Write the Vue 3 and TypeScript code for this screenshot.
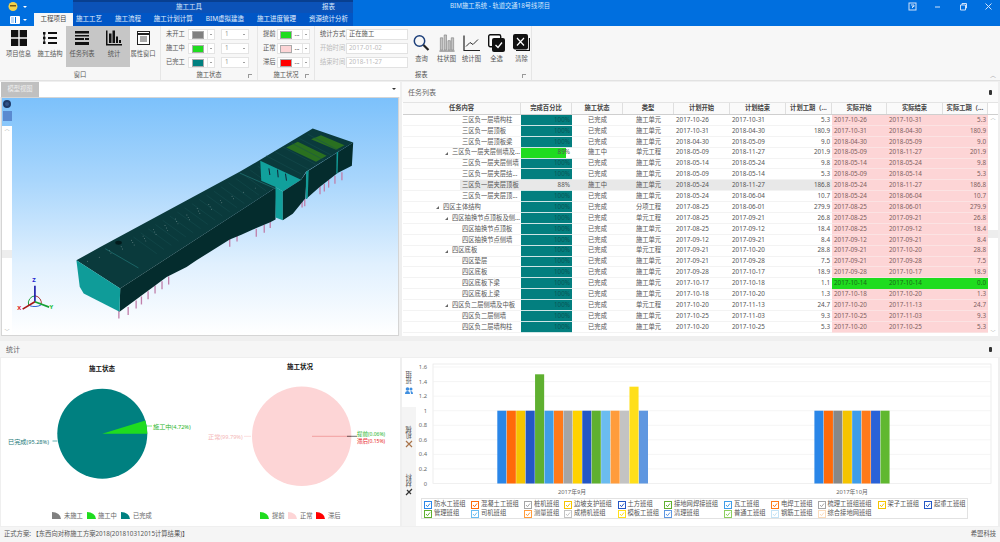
<script setup lang="ts">
interface Row {
  name: string
  depth: number
  pct: number
  state: string
  type: string
  ps: string
  pe: string
  pd: string
  as?: string
  ae?: string
  ad?: string
  early?: boolean
  selected?: boolean
}

const unit = '施工单元'
const group = '单元工程'
const done = '已完成'

const rows: Row[] = [
  { name: '三区负一层墙构柱', depth: 2, pct: 100, state: done, type: unit, ps: '2017-10-26', pe: '2017-10-31', pd: '5.3' },
  { name: '三区负一层顶板', depth: 2, pct: 100, state: done, type: unit, ps: '2017-10-31', pe: '2018-04-30', pd: '180.9' },
  { name: '三区负一层顶板梁', depth: 2, pct: 100, state: done, type: unit, ps: '2018-04-30', pe: '2018-05-09', pd: '9.0' },
  { name: '三区负一层夹层侧墙及...', depth: 1, pct: 89, state: '施工中', type: group, ps: '2018-05-09', pe: '2018-11-27', pd: '201.9' },
  { name: '三区负一层夹层侧墙', depth: 2, pct: 100, state: done, type: unit, ps: '2018-05-14', pe: '2018-05-24', pd: '9.8' },
  { name: '三区负一层夹层结...', depth: 2, pct: 100, state: done, type: unit, ps: '2018-05-09', pe: '2018-05-14', pd: '5.3' },
  { name: '三区负一层夹层顶板', depth: 2, pct: 88, state: '施工中', type: unit, ps: '2018-05-24', pe: '2018-11-27', pd: '186.8', selected: true },
  { name: '三区负一层夹层顶...', depth: 2, pct: 100, state: done, type: unit, ps: '2018-05-24', pe: '2018-06-04', pd: '10.7' },
  { name: '四区主体结构', depth: 0, pct: 100, state: done, type: '分项工程', ps: '2017-08-25', pe: '2018-06-01', pd: '279.9' },
  { name: '四区抽换节点顶板及侧...', depth: 1, pct: 100, state: done, type: group, ps: '2017-08-25', pe: '2017-09-21', pd: '26.8' },
  { name: '四区抽换节点顶板', depth: 2, pct: 100, state: done, type: unit, ps: '2017-08-25', pe: '2017-09-12', pd: '18.4' },
  { name: '四区抽换节点侧墙', depth: 2, pct: 100, state: done, type: unit, ps: '2017-09-12', pe: '2017-09-21', pd: '8.4' },
  { name: '四区底板', depth: 1, pct: 100, state: done, type: group, ps: '2017-09-21', pe: '2017-10-20', pd: '28.8' },
  { name: '四区垫层', depth: 2, pct: 100, state: done, type: unit, ps: '2017-09-21', pe: '2017-09-28', pd: '7.5' },
  { name: '四区底板', depth: 2, pct: 100, state: done, type: unit, ps: '2017-09-28', pe: '2017-10-17', pd: '18.9' },
  { name: '四区底板下梁', depth: 2, pct: 100, state: done, type: unit, ps: '2017-10-17', pe: '2017-10-18', pd: '1.1', as: '2017-10-14', ae: '2017-10-14', ad: '0.0', early: true },
  { name: '四区底板上梁', depth: 2, pct: 100, state: done, type: unit, ps: '2017-10-18', pe: '2017-10-20', pd: '1.3' },
  { name: '四区负二层侧墙及中板', depth: 1, pct: 100, state: done, type: group, ps: '2017-10-20', pe: '2017-11-13', pd: '24.7' },
  { name: '四区负二层侧墙', depth: 2, pct: 100, state: done, type: unit, ps: '2017-10-25', pe: '2017-11-03', pd: '9.3' },
  { name: '四区负二层墙构柱', depth: 2, pct: 100, state: done, type: unit, ps: '2017-10-20', pe: '2017-10-25', pd: '5.3' }
]

const columns = ['任务内容', '完成百分比', '施工状态', '类型', '计划开始', '计划结束', '计划工期（...', '实际开始', '实际结束', '实际工期（...']

const tabs = ['施工工艺', '施工流程', '施工计划计算', 'BIM虚拟建造', '施工进度管理', '资源统计分析']

const statusRows = [
  { label: '未开工', color: '#808080' },
  { label: '施工中', color: '#1fdc1f' },
  { label: '已完工', color: '#008080' }
]
const progressRows = [
  { label: '提前', color: '#1fdc1f' },
  { label: '正常', color: '#fdd5d6' },
  { label: '滞后', color: '#f00' }
]
const filters = [
  { label: '统计方式', value: '正在施工', off: false },
  { label: '开始时间', value: '2017-01-02', off: true },
  { label: '结束时间', value: '2018-11-27', off: true }
]

const y0 = 483.5
const perUnit = 72.8
const ticks = ['0', '0.2', '0.4', '0.6', '0.8', '1', '1.2', '1.4', '1.6']

const first: [string, number][] = [
  ['#2a86e8', 1], ['#ff6a0a', 1], ['#f5c400', 1], ['#2457c5', 1], ['#5fb030', 1.5], ['#3f9de8', 1], ['#ff7a1a', 1], ['#a5a5a5', 1],
  ['#ffd200', 1], ['#2457c5', 1], ['#5fb030', 1], ['#6bbcf0', 1], ['#ff9c3c', 1], ['#c3c3c3', 1], ['#ffdf1a', 1.33], ['#5f97e0', 1]
]
const second = ['#2a86e8', '#ff6a0a', '#888888', '#f5c400', '#3f9de8', '#ff7a1a', '#2a62d8', '#60b830']

const legend = [
  { t: '防水工班组', c: '#2a86e8' }, { t: '混凝土工班组', c: '#ff6a0a' }, { t: '桩机班组', c: '#a5a5a5' }, { t: '边坡支护班组', c: '#f5c400' },
  { t: '土方班组', c: '#2457c5' }, { t: '接地网焊接班组', c: '#5fb030' }, { t: '瓦工班组', c: '#3f9de8' }, { t: '电焊工班组', c: '#ff7a1a' },
  { t: '梳理工班组班组', c: '#a5a5a5' }, { t: '架子工班组', c: '#f5c400' }, { t: '起重工班组', c: '#2457c5' },
  { t: '管理班组', c: '#5fb030' }, { t: '司机班组', c: '#6bbcf0' }, { t: '测量班组', c: '#ff9c3c' }, { t: '成槽机班组', c: '#c3c3c3' },
  { t: '模板工班组', c: '#ffdf1a' }, { t: '清理班组', c: '#5f97e0' }, { t: '普通工班组', c: '#8ccf5f' }, { t: '钢筋工班组', c: '#c5e3f5' },
  { t: '综合接地网班组', c: '#fbdcbc' }
]

// piles under the long side of the model, in zoomed-up model coordinates
const piles = [
  [356, 678], [384, 668], [408, 648], [424, 636], [444, 620], [465, 603], [486, 590], [506, 576],
  [690, 462], [712, 446], [770, 432], [794, 420], [812, 406], [908, 344], [916, 340],
  [962, 304], [975, 296], [988, 284], [1007, 272], [1028, 262]
]
const ribsA = Array.from({ length: 18 }, (_, i) => i)
const ribsB = Array.from({ length: 6 }, (_, i) => i)
const dotsA = Array.from({ length: 36 }, (_, i) => i)
</script>

<template>
  <div class="app">
    <header class="titlebar">
      <div class="title-top">
        <div class="quick">
          <svg width="12" height="11" viewBox="0 0 12 11"><circle cx="6" cy="5.5" r="4.5" fill="#f3d24a" /><rect x="3" y="4" width="6" height="1.5" fill="#7a5a10" /></svg>
          <span class="caret-w"></span>
        </div>
        <div class="context">
          <span class="ctx-tool">施工工具</span>
          <span class="ctx-report">报表</span>
        </div>
        <div class="app-title">BIM施工系统 - 轨道交通18号线项目</div>
        <div class="win">
          <svg width="9" height="9" viewBox="0 0 9 9"><rect x="1" y="1" width="7" height="7" fill="none" stroke="#cfe2fa" /><path d="M3 3h3v1.5H4.5V6" fill="none" stroke="#cfe2fa" /></svg>
          <svg width="9" height="9" viewBox="0 0 9 9"><path d="M2 5h5" stroke="#cfe2fa" /></svg>
          <svg width="9" height="9" viewBox="0 0 9 9"><path d="M1.5 3h5v5h-5zM3 3V1.500h4.500V6H6.500" fill="none" stroke="#cfe2fa" /></svg>
          <svg width="9" height="9" viewBox="0 0 9 9"><path d="M1.5 1.500l6 6M7.500 1.500l-6 6" stroke="#cfe2fa" /></svg>
        </div>
      </div>
      <div class="title-tabs">
        <div class="file-btn">
          <svg width="10" height="8" viewBox="0 0 10 8"><rect width="10" height="8" rx="1" fill="#fff" /><rect x="5" y="1" width="1" height="6" fill="#006fdf" /><rect x="1" y="1" width="3" height="6" fill="#bcd8f6" /></svg>
          <span class="caret-w"></span>
        </div>
        <div class="tab active">工程项目</div>
        <div class="tabs-band">
          <span v-for="t in tabs" :key="t" class="tab">{{ t }}</span>
        </div>
      </div>
    </header>

    <section class="ribbon">
      <div class="rgroup g-window">
        <div class="rbody">
          <div class="rbtn">
            <svg width="16" height="16" viewBox="0 0 16 16"><path d="M0 0h7.300v7.300H0zM8.700 0H16v7.300H8.700zM0 8.700h7.300V16H0zM8.700 8.700H16V16H8.700z" fill="#111" /></svg>
            <span>项目信息</span>
          </div>
          <div class="rbtn">
            <svg width="16" height="16" viewBox="0 0 16 16"><path d="M1 2h2.500v2.500H1zM1 6.800h2.500v2.500H1zM1 11.500h2.500V14H1zM6 2h9v2H6zM6 7h9v2H6zM6 12h9v2H6z" fill="#111" /><path d="M2.200 4v8.500" stroke="#111" /></svg>
            <span>施工结构</span>
          </div>
          <div class="rbtn on">
            <svg width="16" height="14" viewBox="0 0 16 14"><path d="M1 0h14v2.500H1zM1 4h14v1.500H1zM1 7h9v2H1zM11 7h4v2h-4zM1 11h14v3H1z" fill="#111" /></svg>
            <span>任务列表</span>
          </div>
          <div class="rbtn on">
            <svg width="16" height="15" viewBox="0 0 16 15"><path d="M0 0h1.500v13.500H16V15H0zM3 3h2.500v9.500H3zM6.500 0H9v12.500H6.500zM10 6h2v6.500h-2zM13 9.500h2v3h-2z" fill="#111" /></svg>
            <span>统计</span>
          </div>
          <div class="rbtn">
            <svg width="13" height="14" viewBox="0 0 13 14"><rect x=".5" y=".5" width="12" height="13" fill="#fff" stroke="#222" /><path d="M.5 3h12" stroke="#222" stroke-width="2" /><path d="M3 6h7M3 8h7M3 10h7" stroke="#555" /></svg>
            <span>属性窗口</span>
          </div>
        </div>
        <div class="rlabel">窗口</div>
      </div>

      <div class="rgroup g-status">
        <div class="rbody form">
          <div v-for="s in statusRows" :key="s.label" class="frow">
            <span class="flabel">{{ s.label }}</span>
            <span class="swatch"><i :style="{ background: s.color }"></i></span>
            <span class="drop"></span>
            <span class="spin">1<em class="drop"></em></span>
          </div>
        </div>
        <div class="rlabel">施工状态<i class="launch"></i></div>
      </div>

      <div class="rgroup g-progress">
        <div class="rbody form">
          <div v-for="s in progressRows" :key="s.label" class="frow">
            <span class="flabel">{{ s.label }}</span>
            <span class="swatch wide"><i :style="{ background: s.color }"></i><b>...</b></span>
            <span class="drop"></span>
          </div>
        </div>
        <div class="rlabel">施工状况<i class="launch"></i></div>
      </div>

      <div class="rgroup g-filter">
        <div class="rbody form">
          <div v-for="f in filters" :key="f.label" class="frow" :class="{ off: f.off }">
            <span class="flabel">{{ f.label }}</span>
            <span class="input">{{ f.value }}</span>
          </div>
        </div>
      </div>

      <div class="rgroup g-report">
        <div class="rbody">
          <div class="rbtn">
            <svg width="17" height="17" viewBox="0 0 17 17"><circle cx="6.500" cy="6.500" r="5.200" fill="none" stroke="#1d3f7a" stroke-width="1.500" /><path d="M10.500 10.500l5 5" stroke="#222" stroke-width="2.200" /></svg>
            <span>查询</span>
          </div>
          <div class="rbtn">
            <svg width="18" height="19" viewBox="0 0 18 19"><path d="M1 18h16" stroke="#666" /><path d="M2 4h2.500v13H2zM6 1h2.500v16H6zM10 7h2.500v10H10zM13.500 4H16v13h-2.500z" fill="#c4c4c4" stroke="#777" stroke-width=".6" /></svg>
            <span>柱状图</span>
          </div>
          <div class="rbtn">
            <svg width="17" height="17" viewBox="0 0 17 17"><path d="M1 1v15h16" fill="none" stroke="#222" stroke-width="1.200" /><path d="M3 12l4-4 3 2 5-5" fill="none" stroke="#333" /></svg>
            <span>统计图</span>
          </div>
          <div class="rbtn">
            <svg width="17" height="18" viewBox="0 0 17 18"><rect x=".7" y=".7" width="12" height="12" rx="1.500" fill="#fff" stroke="#111" stroke-width="1.400" /><rect x="4" y="4" width="13" height="14" rx="2" fill="#111" /><path d="M7.500 11l2.500 2.500 4-5" fill="none" stroke="#fff" stroke-width="1.300" /></svg>
            <span>全选</span>
          </div>
          <div class="rbtn">
            <svg width="17" height="18" viewBox="0 0 17 18"><path d="M3 16.500h13.500V4" fill="none" stroke="#111" stroke-width="1.200" /><rect width="15" height="15.500" rx="2" fill="#111" /><path d="M4 4l7 7.500M11 4l-7 7.500" stroke="#fff" stroke-width="1.200" /></svg>
            <span>清除</span>
          </div>
        </div>
        <div class="rlabel left">报表<i class="launch"></i></div>
      </div>
      <span class="collapse">︿</span>
    </section>

    <main class="main">
      <div class="top">
        <section class="model">
          <div class="doc-tabs">
            <span class="doc-tab">模型视图</span>
            <span class="doc-menu"></span>
          </div>
          <div class="viewport">
            <div class="tool-strip">
              <span class="tool-round"></span>
              <span class="tool-square"></span>
              <div class="tool-scroll">
                <span class="chev">︿</span>
                <span class="thumb"></span>
                <span class="chev">﹀</span>
              </div>
            </div>
            <svg class="scene" viewBox="34 36 1163 714">
              <g stroke="#c080ab" stroke-width="4">
                <line v-for="(p, i) in piles" :key="'p' + i" :x1="p[0]" :y1="p[1] - 2" :x2="p[0]" :y2="p[1] + 22" />
              </g>
              <polygon points="228,525 300,485 720,258 782,222 940,128 1062,170 920,258 905,282 830,305 360,610" fill="#0a3a3c" />
              <polygon points="360,610 830,305 828,402 812,410 760,432 725,448 690,462 590,525 560,545 500,575 358,680" fill="#042c2d" />
              <polygon points="860,185 895,168 982,210 950,228" fill="#2a7020" />
              <polygon points="935,160 965,148 1036,178 1010,192" fill="#2a7020" />
              <g stroke="#174f50" stroke-width="1.500">
                <line v-for="i in ribsA" :key="'a' + i" :x1="400 + i * 22" :y1="455 - i * 12.600" :x2="470 + i * 22" :y2="505 - i * 12.600" />
                <line v-for="i in ribsB" :key="'b' + i" :x1="800 + i * 25" :y1="210 - i * 13" :x2="905 + i * 25" :y2="265 - i * 13" />
              </g>
              <line x1="315" y1="490" x2="415" y2="548" stroke="#1b6566" stroke-width="3" />
              <line x1="720" y1="262" x2="830" y2="310" stroke="#1b6566" stroke-width="3" />
              <g fill="#8aa0a0">
                <circle v-for="i in dotsA" :key="'d' + i" :cx="262 + (i % 6) * 24 + i * 11" :cy="528 - (i % 6) * 7 - i * 5.300" r="1.400" />
              </g>
              <ellipse cx="355" cy="472" rx="10" ry="6" fill="#021b1c" />
              <polygon points="228,525 360,610 358,680 250,625 238,605" fill="#0f9c99" />
              <polygon points="782,225 905,282 850,318 828,304 785,285" fill="#11a09c" />
              <polygon points="828,304 850,318 850,404 828,396" fill="#11a09c" />
              <polygon points="850,318 905,282 922,258 918,338 880,385 850,404" fill="#042c2d" />
              <polygon points="922,258 1062,170 1058,240 1015,262 960,305 920,340" fill="#042c2d" />
              <polygon points="920,258 928,254 925,338 919,340" fill="#139a96" />
              <polygon points="1012,200 1017,197 1015,262 1011,264" fill="#139a96" />
              <g stroke="#123" stroke-width="3">
                <line x1="808" y1="248" x2="811" y2="268" />
                <line x1="834" y1="252" x2="836" y2="275" />
                <line x1="858" y1="264" x2="861" y2="285" />
              </g>
              <!-- axis triad -->
              <g fill="none" stroke-width="3">
                <path d="M84 660a22 22 0 0 1 20-28" stroke="#1f9f3f" />
                <path d="M104 632a22 22 0 0 1 18 26" stroke="#a33" />
                <path d="M88 662a24 12 0 0 0 34-3" stroke="#2b5fd0" />
              </g>
              <line x1="103" y1="650" x2="103" y2="602" stroke="#1a1aa8" stroke-width="5" />
              <line x1="103" y1="650" x2="66" y2="672" stroke="#a81515" stroke-width="5" />
              <line x1="103" y1="650" x2="146" y2="666" stroke="#15a035" stroke-width="5" />
              <text x="95" y="590" class="axis" fill="#2222d0">Z</text>
              <text x="50" y="676" class="axis" fill="#e02020">X</text>
              <text x="147" y="672" class="axis" fill="#20c040">Y</text>
            </svg>
          </div>
        </section>

        <section class="tasks">
          <div class="panel-head">
            <span>任务列表</span>
            <span class="pin"></span>
          </div>
          <div class="table">
            <div class="tr th">
              <span v-for="c in columns" :key="c" class="hc">{{ c }}</span>
            </div>
            <div
              v-for="(r, i) in rows"
              :key="i"
              class="tr"
              :class="{ selected: r.selected, early: r.early }"
            >
              <span class="c-name" :class="'d' + r.depth"><span class="nm"><i v-if="r.depth < 2" class="tree-caret"></i>{{ r.name }}</span></span>
              <span class="c-pct" :class="{ run: r.pct < 100 && !r.selected }">
                <i v-if="!r.selected" class="fill" :style="{ width: r.pct + '%' }"></i>
                <b>{{ r.pct }}%</b>
              </span>
              <span class="c-mid">{{ r.state }}</span>
              <span class="c-mid">{{ r.type }}</span>
              <span class="c-date">{{ r.ps }}</span>
              <span class="c-date">{{ r.pe }}</span>
              <span class="c-num">{{ r.pd }}</span>
              <span class="c-date act">{{ r.as ?? r.ps }}</span>
              <span class="c-date act">{{ r.ae ?? r.pe }}</span>
              <span class="c-num act">{{ r.ad ?? r.pd }}</span>
            </div>
            <div class="vscroll">
              <span class="chev">︿</span>
              <span class="thumb"></span>
              <span class="chev">﹀</span>
            </div>
          </div>
        </section>
      </div>

      <div class="panel-head stat-head">
        <span>统计</span>
        <span class="pin"></span>
      </div>

      <div class="bottom">
        <section class="pies">
          <svg viewBox="1 358 399 168" width="399" height="168">
            <text x="102" y="371" class="ctitle" text-anchor="middle">施工状态</text>
            <circle cx="102.300" cy="433.700" r="45" fill="#008080" />
            <path d="M102.300 433.700L147.300 433.700A45 45 0 0 0 145.300 420.500Z" fill="#1fdc1f" />
            <path d="M147 426h5" stroke="#1fdc1f" stroke-width=".6" />
            <text x="153" y="429" class="lab" fill="#28b428">施工中<tspan class="pc">(4.72%)</tspan></text>
            <path d="M52.500 441h5" stroke="#008080" stroke-width=".6" />
            <text x="8" y="444" class="lab" fill="#1a7878">已完成<tspan class="pc">(95.28%)</tspan></text>
            <g class="leg">
              <path d="M52 519v-7a9 7 0 0 1 9 7z" fill="#808080" /><text x="64" y="518">未施工</text>
              <path d="M87 519v-7a9 7 0 0 1 9 7z" fill="#1fdc1f" /><text x="98" y="518">施工中</text>
              <path d="M121 519v-7a9 7 0 0 1 9 7z" fill="#008080" /><text x="133" y="518">已完成</text>
            </g>

            <text x="300" y="369" class="ctitle" text-anchor="middle">施工状况</text>
            <circle cx="301.700" cy="436.300" r="49.700" fill="#fdd5d6" />
            <path d="M312 436.300h39" stroke="#ec8a8a" stroke-width=".7" />
            <path d="M347 436.300h10" stroke="#333" stroke-width=".7" />
            <path d="M244 436.300h7" stroke="#f8c8c8" stroke-width=".6" />
            <text x="208" y="439" class="lab" fill="#f4b8b8">正常<tspan class="pc">(99.79%)</tspan></text>
            <text x="357" y="436" class="lab tight" fill="#28b428">提前<tspan class="pc">(0.06%)</tspan></text>
            <text x="357" y="443" class="lab tight" fill="#e81818">滞后<tspan class="pc">(0.15%)</tspan></text>
            <g class="leg">
              <path d="M260 519v-7a9 7 0 0 1 9 7z" fill="#1fdc1f" /><text x="272" y="518">提前</text>
              <path d="M288 519v-7a9 7 0 0 1 9 7z" fill="#fdd5d6" /><text x="300" y="518">正常</text>
              <path d="M316 519v-7a9 7 0 0 1 9 7z" fill="#f00" /><text x="328" y="518">滞后</text>
            </g>
          </svg>
        </section>

        <section class="bars">
          <div class="side-tabs">
            <div class="stab on">
              <span>班组</span>
              <svg width="8" height="8" viewBox="0 0 8 8"><circle cx="2.500" cy="3" r="1.800" fill="#3f8fe0" /><circle cx="6" cy="3" r="1.500" fill="#3f8fe0" /><path d="M0 8c0-2 1-3 2.500-3S5 6 5 8zM5.500 5C7 5 8 6 8 8H6z" fill="#3f8fe0" /></svg>
            </div>
            <div class="stab">
              <span>机械</span>
              <svg width="8" height="8" viewBox="0 0 8 8"><path d="M1 1l6 6M7 1L1 7" stroke="#a9744a" stroke-width="1.200" /></svg>
            </div>
            <div class="stab">
              <span>材料</span>
              <svg width="8" height="8" viewBox="0 0 8 8"><path d="M1 7l6-6M2 2l4 4" stroke="#333" stroke-width="1.200" /></svg>
            </div>
          </div>
          <div class="chart-wrap">
            <svg viewBox="416 358 582 138" width="582" height="138">
              <rect x="433" y="364" width="558" height="119.500" fill="#fff" stroke="#e6e6e6" stroke-width=".7" />
              <g v-for="(t, i) in ticks" :key="t">
                <line x1="433" x2="991" :y1="y0 - i * 0.2 * perUnit" :y2="y0 - i * 0.2 * perUnit" stroke="#f0f0f0" stroke-width=".7" />
                <text x="427" :y="y0 - i * 0.2 * perUnit + 2" class="tick" text-anchor="end">{{ t }}</text>
              </g>
              <rect
                v-for="(b, i) in first"
                :key="'f' + i"
                :x="497.300 + i * 9.440"
                :y="y0 - b[1] * perUnit"
                width="9.100"
                :height="b[1] * perUnit"
                :fill="b[0]"
              />
              <rect
                v-for="(c, i) in second"
                :key="'s' + i"
                :x="814.400 + i * 9.440"
                :y="y0 - perUnit"
                width="9.100"
                :height="perUnit"
                :fill="c"
              />
              <text x="572" y="494" class="tick" text-anchor="middle">2017年9月</text>
              <text x="852" y="494" class="tick" text-anchor="middle">2017年10月</text>
            </svg>
            <div class="legend">
              <span v-for="l in legend" :key="l.t" class="li">
                <svg width="8" height="8" viewBox="0 0 8 8"><rect x=".5" y=".5" width="7" height="7" fill="#fff" :stroke="l.c" /><path d="M2 4l1.500 1.700L6 2.500" fill="none" :stroke="l.c" /></svg>
                {{ l.t }}
              </span>
            </div>
          </div>
        </section>
      </div>
    </main>

    <footer class="status">
      <span>正式方案: 【东西向对称施工方案2018(201810312015计算结果)】</span>
      <span>希盟科技</span>
    </footer>
  </div>
</template>

<style>
html,
body {
  margin: 0;
  overflow: hidden;
}
</style>

<style scoped>
.app {
  width: 1000px;
  height: 542px;
  display: flex;
  flex-direction: column;
  overflow: hidden;
  background: #efefef;
  font-family: "Noto Sans", "Noto Sans CJK SC", sans-serif;
  font-size: 6.3px;
  color: #555;
  line-height: 1;
}

/* title bar */
.titlebar {
  height: 26px;
  flex: none;
  background: #006fdf;
  color: #fff;
}
.title-top,
.title-tabs {
  height: 13px;
  display: flex;
}
.quick {
  width: 73px;
  display: flex;
  align-items: center;
  gap: 4px;
  padding-left: 7px;
  box-sizing: border-box;
}
.caret-w {
  width: 0;
  height: 0;
  border: 2px solid transparent;
  border-top-color: #fff;
  margin-top: 2px;
}
.context {
  width: 280px;
  background: #0b52b8;
  border-top: 2px solid #083f90;
  box-sizing: border-box;
  display: flex;
  align-items: center;
  font-size: 6.5px;
  color: #dce9fa;
}
.ctx-tool {
  margin-left: 103px;
}
.ctx-report {
  margin-left: 120px;
}
.app-title {
  margin-left: 97px;
  align-self: center;
  color: #d8e8fb;
  white-space: nowrap;
}
.win {
  margin-left: auto;
  width: 92px;
  display: flex;
  justify-content: space-between;
  align-items: center;
  padding-right: 7px;
  box-sizing: border-box;
}
.file-btn {
  width: 34px;
  display: flex;
  align-items: center;
  gap: 3px;
  padding-left: 10px;
  box-sizing: border-box;
}
.tab {
  color: #e3effc;
  font-size: 6.5px;
  white-space: nowrap;
}
.tab.active {
  width: 39px;
  background: #f7f7f7;
  color: #444;
  display: flex;
  align-items: center;
  justify-content: center;
}
.tabs-band {
  width: 280px;
  background: #0056c6;
  display: flex;
  align-items: center;
  justify-content: space-between;
  padding: 0 5px 0 3px;
  box-sizing: border-box;
}

/* ribbon */
.ribbon {
  height: 55px;
  flex: none;
  display: flex;
  position: relative;
  background: #f7f7f7;
  border-bottom: 1px solid #e2e2e2;
  box-sizing: border-box;
}
.rgroup {
  display: flex;
  flex-direction: column;
  border-right: 1px solid #e6e6e6;
  box-sizing: border-box;
  flex: none;
}
.g-window { width: 161px; }
.g-status { width: 97px; }
.g-progress { width: 57px; }
.g-filter { width: 93px; border-right: 0; }
.g-report { width: 124px; }
.rbody {
  height: 45px;
  display: flex;
  flex: none;
}
.rlabel {
  flex: 1;
  position: relative;
  display: flex;
  align-items: center;
  justify-content: center;
  color: #555;
}
.rlabel.left {
  justify-content: flex-start;
  padding-left: 7px;
}
.launch {
  position: absolute;
  right: 5px;
  top: 3px;
  width: 3px;
  height: 3px;
  border-top: 1px solid #999;
  border-left: 1px solid #999;
}
.rbtn {
  width: 32px;
  height: 41px;
  box-sizing: border-box;
  padding-top: 4px;
  display: flex;
  flex-direction: column;
  align-items: center;
  gap: 5px;
  flex: none;
  white-space: nowrap;
}
.rbtn svg {
  height: 16px;
}
.rbtn.on {
  background: #c6c6c6;
}
.g-window .rbtn:first-child {
  width: 33px;
  margin-left: 2px;
}
.g-window .rbtn:nth-child(2) {
  width: 20px;
  margin: 0 6px 0 5px;
}
.g-window .rbtn:nth-child(5) {
  width: 26px;
}
.g-report .rbody {
  padding-left: 1px;
}
.g-report .rbtn {
  width: 25px;
  height: 45px;
  padding-top: 8px;
  gap: 4px;
}
.g-report .rbtn svg {
  height: 18px;
}
.form {
  flex-direction: column;
  gap: 3px;
  padding: 3px 0 0 5px;
  box-sizing: border-box;
}
.frow {
  height: 11px;
  display: flex;
  align-items: center;
}
.flabel {
  width: 22px;
  flex: none;
  white-space: nowrap;
  color: #555;
}
.swatch {
  width: 20px;
  height: 11px;
  background: #fff;
  border: 1px solid #e4e4e4;
  box-sizing: border-box;
  display: flex;
  align-items: center;
  justify-content: center;
  gap: 2px;
}
.swatch i {
  width: 12px;
  height: 8px;
  border: 1px solid #aaa;
  box-sizing: border-box;
}
.swatch b {
  font-weight: 400;
}
.swatch.wide {
  width: 26px;
}
.drop {
  width: 7px;
  height: 11px;
  background: #fff;
  border: 1px solid #e4e4e4;
  border-left: 0;
  box-sizing: border-box;
  display: block;
  position: relative;
}
.drop::after {
  content: '';
  position: absolute;
  left: 2px;
  top: 4px;
  border: 1.5px solid transparent;
  border-top-color: #444;
}
.spin {
  margin-left: 6px;
  width: 28px;
  height: 11px;
  background: #fff;
  border: 1px solid #e4e4e4;
  box-sizing: border-box;
  display: flex;
  justify-content: space-between;
  align-items: center;
  padding-left: 3px;
  color: #999;
}
.spin .drop {
  border: 0;
  height: 9px;
}
.g-progress .flabel {
  width: 14px;
}
.g-filter .flabel {
  width: 26px;
}
.input {
  width: 62px;
  height: 11px;
  background: #fff;
  border: 1px solid #e2e2e2;
  box-sizing: border-box;
  padding-left: 2px;
  display: flex;
  align-items: center;
  color: #555;
}
.frow.off .flabel,
.frow.off .input {
  color: #bbb;
}
.collapse {
  position: absolute;
  right: 4px;
  bottom: 2px;
  color: #999;
  font-size: 6px;
}

/* main panes */
.main {
  flex: 1;
  min-height: 0;
  display: flex;
  flex-direction: column;
  background: #efefef;
}
.top {
  height: 254px;
  flex: none;
  display: flex;
  gap: 2px;
  margin-top: 1px;
}
.model {
  width: 400px;
  display: flex;
  flex-direction: column;
}
.doc-tabs {
  height: 15px;
  flex: none;
  background: #fff;
  display: flex;
  justify-content: space-between;
  padding-right: 4px;
  box-sizing: border-box;
}
.doc-tab {
  width: 38px;
  margin-left: 1px;
  background: #c0c0c0;
  color: #eee;
  display: flex;
  align-items: center;
  justify-content: center;
}
.doc-menu {
  width: 0;
  height: 0;
  border: 2px solid transparent;
  border-top-color: #333;
  margin-top: 6px;
}
.viewport {
  flex: 1;
  min-height: 0;
  margin: 0 1px;
  border: 1px solid #d5d5d5;
  display: flex;
  background: linear-gradient(#7cc1fb 0%, #a9d6fc 35%, #e0f0fe 70%, #fff 100%);
  box-sizing: border-box;
}
.tool-strip {
  width: 10px;
  flex: none;
  display: flex;
  flex-direction: column;
  align-items: center;
}
.tool-round {
  width: 8px;
  height: 8px;
  margin-top: 2px;
  border-radius: 50%;
  background: #33558a;
  border: 2px solid #1e3a68;
  box-sizing: border-box;
}
.tool-square {
  width: 9px;
  height: 10px;
  margin-top: 3px;
  background: #5a8ad0;
}
.tool-scroll {
  margin-top: 5px;
  width: 10px;
  flex: 1;
  background: #fff;
  display: flex;
  flex-direction: column;
  align-items: center;
  justify-content: space-between;
  position: relative;
}
.chev {
  font-size: 5px;
  color: #888;
  height: 6px;
}
.thumb {
  position: absolute;
  left: 0;
  width: 100%;
  height: 8px;
  top: 124px;
  background: #ededed;
}
.scene {
  flex: 1;
  min-width: 0;
  height: 100%;
}
.axis {
  font-size: 18px;
  font-weight: 700;
}

.tasks {
  flex: 1;
  min-width: 0;
  display: flex;
  flex-direction: column;
  background: #fff;
  margin-right: 2px;
}
.panel-head {
  height: 20px;
  flex: none;
  background: #fafafa;
  display: flex;
  align-items: center;
  justify-content: space-between;
  padding: 0 6px;
  box-sizing: border-box;
  font-size: 7px;
  color: #666;
}
.pin {
  width: 3px;
  height: 5px;
  background: #333;
  border-radius: 1px;
}
.table {
  flex: 1;
  position: relative;
  padding-left: 1px;
  min-height: 0;
  overflow: hidden;
}
.tr {
  display: grid;
  grid-template-columns: 118px 51px 51px 51px 56px 56px 46px 55px 56px 45px;
  height: 10.9px;
  align-items: stretch;
}
.tr > span {
  display: flex;
  align-items: center;
  white-space: nowrap;
  border-bottom: 1px solid #f3f3f3;
  box-sizing: border-box;
  min-width: 0;
}
.th {
  height: 13px;
  border-top: 1px solid #e4e4e4;
  border-bottom: 1px solid #cfcfcf;
  box-sizing: border-box;
}
.tr.th .hc {
  justify-content: center;
  font-weight: 700;
  color: #444;
  background: #fafafa;
  border-right: 1px solid #dfdfdf;
  border-bottom: 0;
}
.c-name.d0 { padding-left: 40px; }
.c-name.d1 { padding-left: 49px; }
.c-name.d2 { padding-left: 59px; }
.nm {
  position: relative;
  height: 100%;
  display: flex;
  align-items: center;
  flex: 1;
}
.tree-caret {
  position: absolute;
  left: -7px;
  top: 4px;
  width: 0;
  height: 0;
  border-bottom: 3px solid #666;
  border-left: 3px solid transparent;
}
.c-pct {
  position: relative;
  justify-content: flex-end;
  padding-right: 2px;
}
.tr > .c-pct {
  border-bottom-color: #cfe5e5;
}
.fill {
  position: absolute;
  left: 0;
  top: 0;
  bottom: 0;
  background: #037f7f;
}
.c-pct.run .fill {
  background: #1fdc1f;
}
.c-pct b {
  position: relative;
  font-weight: 400;
  color: #0a5656;
}
.c-pct.run b,
.selected .c-pct b {
  color: #555;
}
.c-mid {
  justify-content: center;
}
.c-date {
  padding-left: 2px;
}
.c-num {
  justify-content: flex-end;
  padding-right: 2px;
}
.tr > .act {
  background: #fdd5d6;
  color: #7d5f60;
  border-bottom-color: #fbe3e3;
}
.tr.early > .act {
  background: #1fdc1f;
  color: #1a6a1a;
  border-bottom-color: #1fdc1f;
}
.selected > span:not(.act):not(.c-name) {
  background: #e8e8e8;
}
.selected .nm {
  background: #e8e8e8;
  margin-left: -2px;
  padding-left: 2px;
}
.vscroll {
  position: absolute;
  right: 0;
  top: 13px;
  bottom: 0;
  width: 10px;
  display: flex;
  flex-direction: column;
  align-items: center;
  justify-content: space-between;
  background: #fff;
}
.vscroll .thumb {
  top: 115px;
}

.stat-head {
  height: 16px;
  margin-top: 5px;
  background: #f6f6f6;
  padding-right: 8px;
}
.bottom {
  height: 169px;
  flex: none;
  display: flex;
  gap: 2px;
  padding-bottom: 1px;
  box-sizing: border-box;
  margin-top: 1px;
}
.pies {
  width: 399px;
  margin-left: 1px;
  background: #fff;
}
.pies svg {
  display: block;
}
.ctitle {
  font-size: 6.5px;
  font-weight: 700;
  fill: #111;
}
.lab {
  font-size: 6.2px;
}
.lab.tight {
  font-size: 5.5px;
}
.pc {
  font-size: 5.6px;
}
.lab.tight .pc {
  font-size: 5px;
}
.leg text {
  font-size: 6.3px;
  fill: #666;
}
.bars {
  width: 596px;
  background: #fff;
  display: flex;
}
.side-tabs {
  width: 14px;
  flex: none;
  background: #f4f4f4;
  display: flex;
  flex-direction: column;
}
.stab {
  height: 48px;
  display: flex;
  flex-direction: column;
  align-items: center;
  justify-content: center;
  gap: 2px;
}
.stab.on {
  height: 49px;
  margin-bottom: 6px;
  background: #fff;
}
.stab span {
  writing-mode: vertical-rl;
  transform: rotate(180deg);
  color: #555;
}
.chart-wrap {
  width: 582px;
  display: flex;
  flex-direction: column;
}
.chart-wrap svg {
  display: block;
}
.tick {
  font-size: 5.8px;
  fill: #666;
}
.legend {
  margin: 2px 0 0 5px;
  width: 547px;
  height: 21px;
  border: 1px solid #e2e2e2;
  box-sizing: border-box;
  padding: 1px 0 0 2px;
  display: grid;
  grid-template-columns: 47px 53px 40px 53.5px 46.5px 60px 47px 46.5px 60px 46.5px auto;
  grid-auto-rows: 9px;
}
.li {
  display: flex;
  align-items: center;
  gap: 2px;
  white-space: nowrap;
  color: #555;
}
.li svg {
  flex: none;
}

.status {
  height: 15px;
  flex: none;
  background: #f5f5f5;
  display: flex;
  justify-content: space-between;
  align-items: center;
  padding: 0 4px;
  color: #555;
}
</style>
